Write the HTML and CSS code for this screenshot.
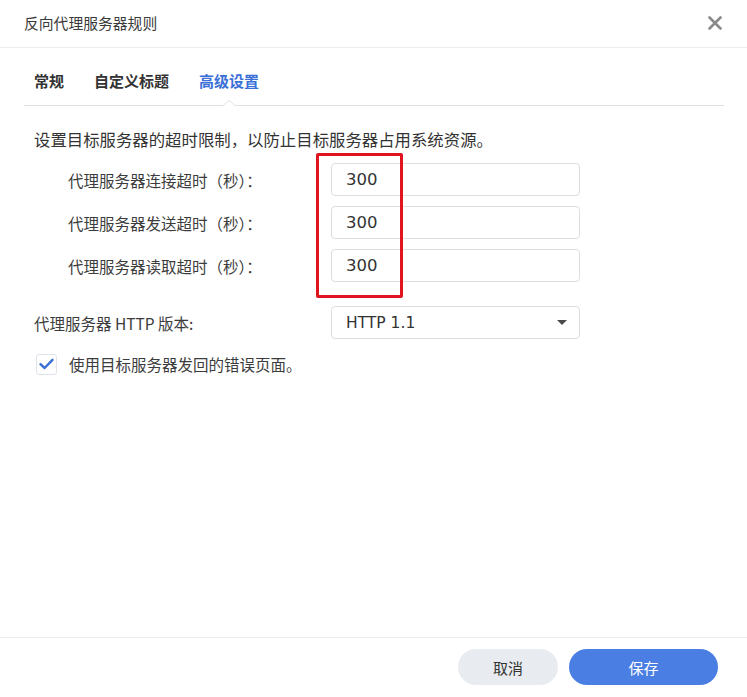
FILE: index.html
```html
<!DOCTYPE html>
<html lang="zh-CN">
<head>
<meta charset="utf-8">
<title>反向代理服务器规则</title>
<link rel="stylesheet" href="styles.css">
</head>
<body>
<div class="dialog">
  <div class="header">
    <div class="title">反向代理服务器规则</div>
    <button class="close" aria-label="关闭">
      <svg width="14" height="14" viewBox="0 0 14 14"><path d="M1.5 1.5 L12.5 12.5 M12.5 1.5 L1.5 12.5" stroke="#8a8a8a" stroke-width="2.6" stroke-linecap="round" fill="none"/></svg>
    </button>
  </div>
  <div class="content">
    <div class="tabs">
      <div class="tab">常规</div>
      <div class="tab">自定义标题</div>
      <div class="tab active">高级设置</div>
    </div>
    <div class="pane">
      <p class="desc">设置目标服务器的超时限制，以防止目标服务器占用系统资源。</p>
      <div class="timeouts">
        <div class="row indent">
          <label class="label">代理服务器连接超时（秒）：</label>
          <div class="field">300</div>
        </div>
        <div class="row indent">
          <label class="label">代理服务器发送超时（秒）：</label>
          <div class="field">300</div>
        </div>
        <div class="row indent">
          <label class="label">代理服务器读取超时（秒）：</label>
          <div class="field">300</div>
        </div>
        <div class="highlight"></div>
      </div>
      <div class="row http">
        <label class="label">代理服务器 HTTP 版本:</label>
        <div class="field select">
          <span>HTTP 1.1</span>
          <span class="caret"></span>
        </div>
      </div>
      <div class="check-row">
        <span class="checkbox">
          <svg width="15" height="12" viewBox="0 0 15 12"><path d="M1.5 6.2 L5.6 10 L13.5 1.8" stroke="#3b6fd8" stroke-width="2.4" fill="none" stroke-linecap="round" stroke-linejoin="round"/></svg>
        </span>
        <span class="check-label">使用目标服务器发回的错误页面。</span>
      </div>
    </div>
  </div>
  <div class="footer">
    <button class="btn cancel">取消</button>
    <button class="btn save">保存</button>
  </div>
</div>
</body>
</html>
```
FILE: styles.css
```css
html, body {
  margin: 0;
  padding: 0;
  background: #ffffff;
}
body {
  font-family: "Noto Sans CJK SC", "Noto Sans", sans-serif;
  color: #333333;
}
.dialog {
  width: 747px;
  height: 697px;
  display: flex;
  flex-direction: column;
  box-sizing: border-box;
}
.header {
  height: 45px;
  flex: 0 0 45px;
  border-bottom: 1px solid #ececec;
  display: flex;
  align-items: center;
  justify-content: space-between;
  padding: 0 25px 2px 24px;
  box-sizing: content-box;
}
.title {
  font-size: 14.8px;
  color: #3a3a3a;
}
.close {
  border: none;
  background: transparent;
  padding: 0;
  width: 14px;
  height: 14px;
  display: flex;
}
.content {
  flex: 1;
  padding: 0 23px 0 24px;
}
.tabs {
  height: 50px;
  border-bottom: 1px solid #e0e0e0;
  display: flex;
  align-items: center;
  gap: 30px;
  padding-left: 10px;
  padding-top: 7px;
}
.tab {
  font-size: 15px;
  font-weight: 700;
  color: #333333;
  position: relative;
  height: 100%;
  display: flex;
  align-items: center;
}
.tab.active {
  color: #3b6fd8;
}
.tab.active::before,
.tab.active::after {
  content: "";
  position: absolute;
  left: 50%;
  bottom: -1px;
  margin-left: -7px;
  border-left: 7px solid transparent;
  border-right: 7px solid transparent;
  border-bottom: 6px solid #e0e0e0;
}
.tab.active::after {
  bottom: -2px;
  border-bottom-color: #ffffff;
}
.pane {
  padding-top: 21px;
}
.desc {
  margin: 0 0 0 10px;
  font-size: 16.4px;
  line-height: 24px;
  color: #333333;
}
.timeouts {
  position: relative;
  margin-top: 12px;
  display: flex;
  flex-direction: column;
  gap: 10px;
}
.row {
  display: grid;
  grid-template-columns: 1fr 249px;
  align-items: center;
  width: 556px;
}
.row.indent {
  padding-left: 44px;
  width: 512px;
}
.label {
  font-size: 15.5px;
  color: #3c3c3c;
}
.field {
  height: 33px;
  box-sizing: border-box;
  border: 1px solid #dedede;
  border-radius: 4px;
  padding-left: 14px;
  display: flex;
  align-items: center;
  font-family: "DejaVu Sans", sans-serif;
  font-size: 16.5px;
  color: #333333;
}
.highlight {
  position: absolute;
  left: 292px;
  top: -10px;
  width: 87px;
  height: 145px;
  box-sizing: border-box;
  border: 3px solid #e0141f;
  border-radius: 2px;
}
.row.http {
  margin-top: 24px;
  padding-left: 10px;
  width: 546px;
}
.select {
  justify-content: space-between;
  padding-right: 12px;
  font-size: 15.5px;
}
.caret {
  width: 0;
  height: 0;
  border-left: 5px solid transparent;
  border-right: 5px solid transparent;
  border-top: 5px solid #4a4a4a;
}
.check-row {
  margin-top: 14px;
  padding-left: 12px;
  display: flex;
  align-items: center;
  gap: 12px;
}
.checkbox {
  width: 21px;
  height: 21px;
  box-sizing: border-box;
  border: 1px solid #dfe3ea;
  border-radius: 3px;
  display: flex;
  align-items: center;
  justify-content: center;
}
.check-label {
  font-size: 15.5px;
  color: #3c3c3c;
}
.footer {
  flex: 0 0 60px;
  border-top: 1px solid #ececec;
  display: flex;
  justify-content: flex-end;
  align-items: flex-start;
  gap: 11px;
  padding: 11px 29px 0 0;
  box-sizing: border-box;
}
.btn {
  height: 36px;
  border: none;
  border-radius: 18px;
  font-family: "Noto Sans CJK SC", sans-serif;
  font-size: 15px;
  padding: 0;
}
.cancel {
  width: 100px;
  background: #e8ebf0;
  color: #333333;
}
.save {
  width: 149px;
  background: #4a7ee3;
  color: #ffffff;
}
```
